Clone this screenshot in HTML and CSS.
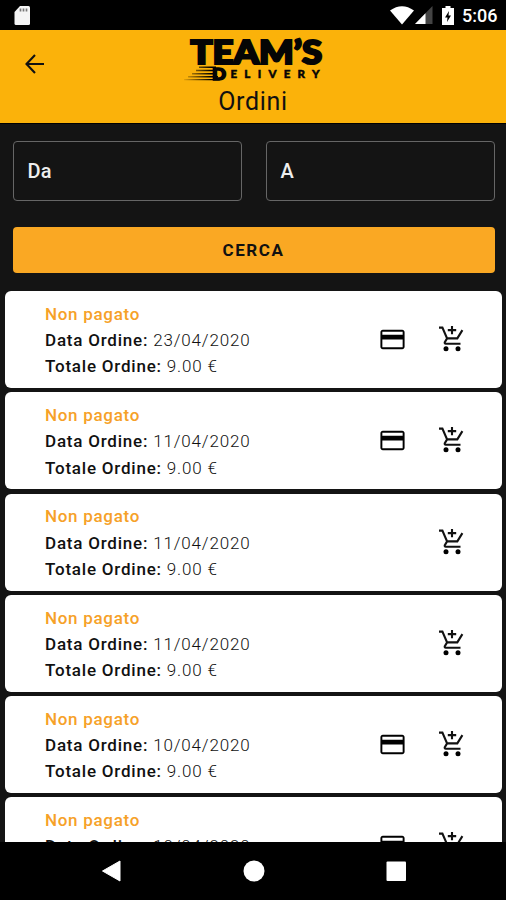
FILE: index.html
```
<!DOCTYPE html>
<html lang="it">
<head>
<meta charset="utf-8">
<title>Ordini</title>
<link rel="stylesheet" href="styles.css">
</head>
<body>
<svg class="defs" aria-hidden="true">
  <symbol id="card" viewBox="0 0 24 24"><path d="M20 4H4c-1.11 0-1.99.89-1.99 2L2 18c0 1.11.89 2 2 2h16c1.11 0 2-.89 2-2V6c0-1.11-.89-2-2-2zm.4 14.4H3.6V12h16.800zm0-10.400H3.600V5.600h16.800z"/></symbol>
  <symbol id="cart" viewBox="0 0 29 29"><g fill="none" stroke="currentColor" stroke-width="2.1"><path d="M2 2.600H5.400L10.100 13.400H20.300L25.400 5.100M10.100 13.400L7.800 17.200Q7.300 18.700 8.700 18.700H23.500M15 1V9.200M10.800 5.100H19.200"/></g><circle cx="9" cy="23.700" r="2.500"/><circle cx="21" cy="23.700" r="2.500"/></symbol>
</svg>
<div class="status">
  <svg class="sd" viewBox="0 0 17 20"><path d="M6 0H14.500Q16 0 16 1.500V17.500Q16 19 14.500 19H2Q.5 19 .5 17.500V6z" fill="#f4f4f4"/><path d="M6.500 2.500V5.500M9.500 2.500V5.500M12.500 2.500V5.500" stroke="#777" stroke-width="1.700"/></svg>
  <div class="status-right">
    <svg class="wifi" viewBox="0 0 24 19"><path d="M0 4.500Q12-4 24 4.500L12 18.500z" fill="#fff"/></svg>
    <svg class="signal" viewBox="0 0 18 18"><path d="M17.500 0V18H0z" fill="#444"/><path d="M10.500 7.200V18H0z" fill="#fff"/></svg>
    <svg class="battery" viewBox="0 0 12 19"><path d="M3.500 0H8.500V2H12V19H0V2H3.500z" fill="#fff"/><path d="M7 5L3 11.500H5.500L5 16L9 9.500H6.500z" fill="#000"/></svg>
    <span class="time">5:06</span>
  </div>
</div>
<header class="header">
  <svg class="back" viewBox="0 0 20 20"><path d="M19 10H2M10 1L1.500 10L10 19" fill="none" stroke="#111" stroke-width="2.100"/></svg>
  <div class="brand">
    <svg class="logo" viewBox="0 0 142 46">
      <defs><linearGradient id="speed"><stop offset="0" stop-color="#000" stop-opacity=".1"/><stop offset=".75" stop-color="#000"/></linearGradient></defs>
      <text class="logo-main" x="8.500" y="26.500" textLength="131.500" lengthAdjust="spacingAndGlyphs">TEAM’S</text>
      <path d="M17 29.500H34V31H17zM14 32.700H34V34.200H14zM10 35.900H34V37.400H10zM6 39.100H36V40.500H6zM2 42H38V43.300H2z" fill="url(#speed)"/>
      <text class="logo-d" x="30" y="42.800" textLength="14" lengthAdjust="spacingAndGlyphs">D</text>
      <text class="logo-sub" x="48.500" y="41" textLength="89">ELIVERY</text>
    </svg>
    <h1 class="title">Ordini</h1>
  </div>
</header>
<main class="content">
  <form class="search">
    <div class="fields"><div class="field">Da</div><div class="field">A</div></div>
    <button class="submit" type="button">CERCA</button>
  </form>
  <section class="orders">
    <article class="order"><div class="info"><p class="unpaid">Non pagato</p><p><b>Data Ordine:</b> 23/04/2020</p><p><b>Totale Ordine:</b> 9.00 €</p></div><svg class="icon-card"><use href="#card"/></svg><svg class="icon-cart"><use href="#cart"/></svg></article>
    <article class="order"><div class="info"><p class="unpaid">Non pagato</p><p><b>Data Ordine:</b> 11/04/2020</p><p><b>Totale Ordine:</b> 9.00 €</p></div><svg class="icon-card"><use href="#card"/></svg><svg class="icon-cart"><use href="#cart"/></svg></article>
    <article class="order"><div class="info"><p class="unpaid">Non pagato</p><p><b>Data Ordine:</b> 11/04/2020</p><p><b>Totale Ordine:</b> 9.00 €</p></div><svg class="icon-cart"><use href="#cart"/></svg></article>
    <article class="order"><div class="info"><p class="unpaid">Non pagato</p><p><b>Data Ordine:</b> 11/04/2020</p><p><b>Totale Ordine:</b> 9.00 €</p></div><svg class="icon-cart"><use href="#cart"/></svg></article>
    <article class="order"><div class="info"><p class="unpaid">Non pagato</p><p><b>Data Ordine:</b> 10/04/2020</p><p><b>Totale Ordine:</b> 9.00 €</p></div><svg class="icon-card"><use href="#card"/></svg><svg class="icon-cart"><use href="#cart"/></svg></article>
    <article class="order"><div class="info"><p class="unpaid">Non pagato</p><p><b>Data Ordine:</b> 10/04/2020</p><p><b>Totale Ordine:</b> 9.00 €</p></div><svg class="icon-card"><use href="#card"/></svg><svg class="icon-cart"><use href="#cart"/></svg></article>
  </section>
</main>
<nav class="navbar">
  <svg viewBox="0 0 22 22"><path d="M19 1V21L1.500 11z" fill="#fff" stroke="#fff" stroke-linejoin="round"/></svg>
  <svg viewBox="0 0 22 22"><circle cx="11" cy="11" r="10.500" fill="#fff"/></svg>
  <svg viewBox="0 0 22 22"><rect x="1.500" y="1.500" width="19.500" height="19.500" rx="1" fill="#fff"/></svg>
</nav>
</body>
</html>
```
FILE: styles.css
```
* { box-sizing: border-box; }
body {
  margin: 0;
  height: 900px;
  display: flex;
  flex-direction: column;
  overflow: hidden;
  background: #000;
  font-family: Roboto, sans-serif;
}
svg { display: block; flex: none; }
.defs { width: 0; height: 0; position: absolute; }
.status {
  height: 30px;
  flex: none;
  display: flex;
  justify-content: space-between;
  padding: 6px 9px 0 14px;
}
.sd { width: 17px; height: 20px; }
.status-right { display: flex; align-items: flex-start; }
.wifi { width: 24px; height: 19px; margin-right: 1px; }
.signal { width: 18px; height: 18px; margin-right: 9px; }
.battery { width: 12px; height: 19px; margin-right: 8px; }
.time { color: #fff; font-size: 18px; font-weight: 500; line-height: 20px; width: 35px; }
.header {
  height: 93px;
  flex: none;
  background: #fbb20a;
  display: grid;
  grid-template-columns: 90px 1fr 90px;
}
.back { width: 20px; height: 20px; margin: 24px 0 0 25px; }
.brand { display: flex; flex-direction: column; align-items: center; padding-top: 7px; }
.logo { width: 142px; height: 46px; overflow: visible; }
.logo-main { font: 900 31.5px Lato, sans-serif; fill: #050505; stroke: #050505; stroke-width: 2.2; }
.logo-d { font: 900 17px Lato, sans-serif; fill: #050505; stroke: #050505; stroke-width: 1.600; }
.logo-sub { font: 900 11.5px Lato, sans-serif; fill: #050505; stroke: #050505; stroke-width: .5; }
.title { margin: 4px 0 0; font-size: 25px; line-height: 30px; font-weight: 400; letter-spacing: .7px; color: #111; }
.content {
  flex: 1;
  min-height: 0;
  overflow: hidden;
  margin-top: 1px;
  background: #141414;
}
.search { padding: 17px 11.500px 0 12.500px; }
.fields { display: grid; grid-template-columns: 1fr 1fr; gap: 24px; }
.field {
  height: 60px;
  border: 1.500px solid #666;
  border-radius: 4px;
  padding-left: 14px;
  line-height: 58px;
  font-size: 20px;
  font-weight: 500;
  letter-spacing: .2px;
  color: #eee;
}
.submit {
  display: block;
  width: 100%;
  height: 46px;
  margin-top: 26px;
  border: 0;
  border-radius: 4px;
  background: #faa823;
  color: #111;
  font: 700 17px/46px Roboto, sans-serif;
  letter-spacing: 1.600px;
  padding: 0;
}
.orders { display: flex; flex-direction: column; gap: 4.250px; padding: 18px 4px 0 5px; }
.order {
  height: 97px;
  flex: none;
  border-radius: 6px;
  background: #fff;
  display: flex;
  align-items: center;
  padding: 0 36px 0 40px;
}
.info { flex: 1; padding-top: 1.500px; }
.info p { margin: 0; font-size: 17px; line-height: 26.200px; font-weight: 300; letter-spacing: .83px; color: #111; white-space: nowrap; }
.info b { font-weight: 500; letter-spacing: .78px; }
.info .unpaid { font-weight: 500; letter-spacing: .7px; color: #f6a128; }
.icon-card { width: 29px; height: 29px; margin-right: 30px; color: #111; }
.icon-cart { width: 29px; height: 29px; color: #111; }
.navbar {
  height: 58px;
  flex: none;
  display: flex;
  align-items: center;
  justify-content: center;
  gap: 120px;
  padding-left: 1px;
}
.navbar svg { width: 22px; height: 22px; }
```
